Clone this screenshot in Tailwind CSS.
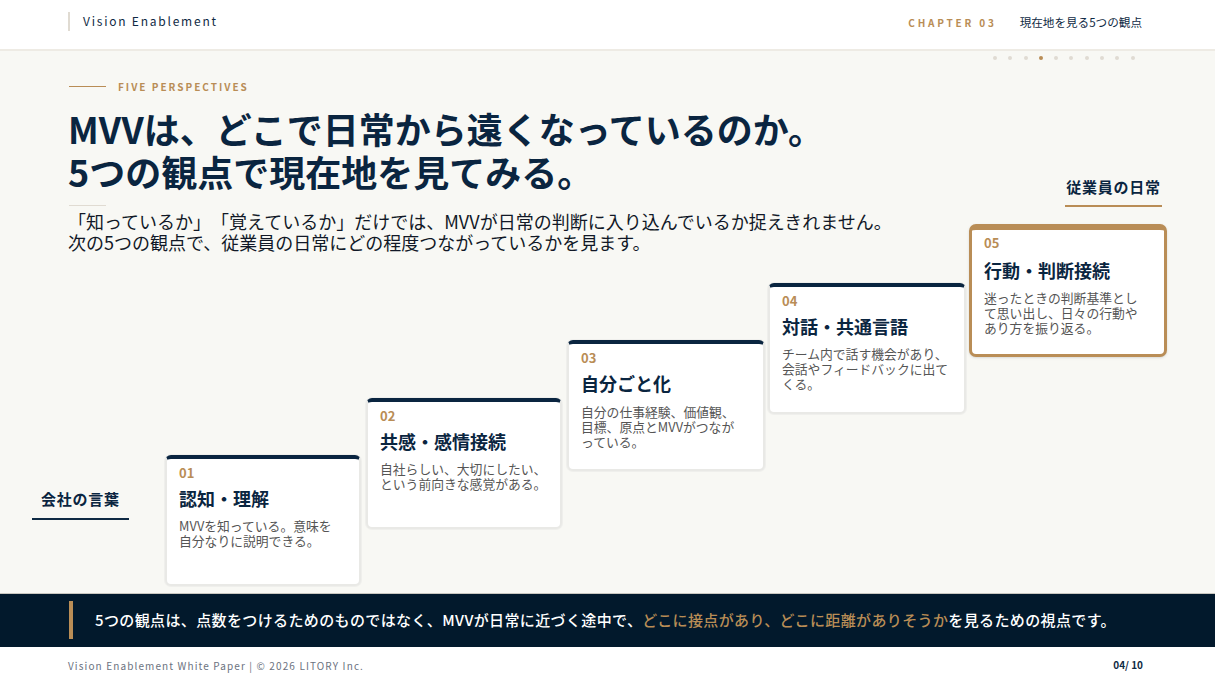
<!DOCTYPE html>
<html lang="ja">
<head>
  <meta charset="UTF-8">
  <title>Vision Enablement</title>
  <script src="https://cdn.jsdelivr.net/npm/@tailwindcss/browser@4"></script>
</head>
<body class="font-['Noto_Sans_CJK_JP','Noto_Sans',sans-serif] [text-spacing-trim:space-all] text-[#0f2a44] bg-white">
<div class="relative w-[1215px] h-[682px] overflow-hidden flex flex-col">

  <!-- Header -->
  <header class="h-[51px] shrink-0 bg-white border-b-2 border-[#eeebe4] flex items-center justify-between pl-[68px] pr-[73px] pb-[7px]">
    <div class="border-l-2 border-[#e0dbd2] pl-[13px] h-[19px] flex items-center text-[12px] tracking-[0.148em] text-[#0f2a44]">Vision Enablement</div>
    <div class="flex items-center gap-[23px] pt-[3px]">
      <span class="text-[10px] font-bold tracking-[0.28em] text-[#b98d56]">CHAPTER 03</span>
      <span class="text-[11.6px] text-[#0f2a44]">現在地を見る5つの観点</span>
    </div>
  </header>

  <!-- Progress dots -->
  <div class="absolute left-[993px] top-[56px] flex items-center gap-[11.3px]">
    <span class="w-[4px] h-[4px] rounded-full bg-[#e0dbd2]"></span>
    <span class="w-[4px] h-[4px] rounded-full bg-[#e0dbd2]"></span>
    <span class="w-[4px] h-[4px] rounded-full bg-[#e0dbd2]"></span>
    <span class="w-[4px] h-[4px] rounded-full bg-[#b98d56]"></span>
    <span class="w-[4px] h-[4px] rounded-full bg-[#e0dbd2]"></span>
    <span class="w-[4px] h-[4px] rounded-full bg-[#e0dbd2]"></span>
    <span class="w-[4px] h-[4px] rounded-full bg-[#e0dbd2]"></span>
    <span class="w-[4px] h-[4px] rounded-full bg-[#e0dbd2]"></span>
    <span class="w-[4px] h-[4px] rounded-full bg-[#e0dbd2]"></span>
    <span class="w-[4px] h-[4px] rounded-full bg-[#e0dbd2]"></span>
  </div>

  <!-- Main -->
  <main class="flex-1 bg-[#f8f8f4] grid">
    <!-- Heading block -->
    <section class="col-start-1 row-start-1 pl-[69px] pt-[26px]">
      <div class="flex items-center gap-[12px] h-[18px]">
        <span class="w-[37px] h-px bg-[#b98d56]"></span>
        <span class="text-[10px] font-bold tracking-[0.2em] text-[#b98d56]">FIVE PERSPECTIVES</span>
      </div>
      <h1 class="mt-[12px] -ml-px text-[36px] leading-[43px] font-bold text-[#0a2540]">MVVは、どこで日常から遠くなっているのか。<br>5つの観点で現在地を見てみる。</h1>
      <div class="mt-[12px] w-[37px] h-px bg-[#e0dbd2]"></div>
      <p class="mt-[5px] -ml-px text-[18px] leading-[21px] text-[#111827]">「知っているか」「覚えているか」だけでは、MVVが日常の判断に入り込んでいるか捉えきれません。<br>次の5つの観点で、従業員の日常にどの程度つながっているかを見ます。</p>
    </section>

    <!-- Stairs -->
    <section class="col-start-1 row-start-1 self-end flex items-end pl-[32px] pb-[7px]">
      <div class="w-[97px] mr-[36px] mb-[66px] border-b-2 border-[#0f2a44] pb-[9px] text-center text-[15px] leading-[21px] font-bold tracking-[0.05em] text-[#0a2540]">会社の言葉</div>

      <article class="w-[196px] h-[131px] mr-[5px] bg-white rounded-[6px] border-2 border-[#e9e9e6] border-t-[4px] border-t-[#0a2540] px-[12px] shadow-[0_0_0_1px_#efefec]">
        <div class="text-[13px] leading-[17px] font-bold text-[#b98d56] mt-[5px]">01</div>
        <h2 class="mt-[5px] text-[18px] leading-[24px] font-bold text-[#0a2540]">認知・理解</h2>
        <p class="mt-[8px] text-[12.8px] leading-[15px] text-[#555]">MVVを知っている。意味を<br>自分なりに説明できる。</p>
      </article>

      <article class="w-[196px] h-[131px] mr-[5px] mb-[57px] bg-white rounded-[6px] border-2 border-[#e9e9e6] border-t-[4px] border-t-[#0a2540] px-[12px] shadow-[0_0_0_1px_#efefec]">
        <div class="text-[13px] leading-[17px] font-bold text-[#b98d56] mt-[5px]">02</div>
        <h2 class="mt-[5px] text-[18px] leading-[24px] font-bold text-[#0a2540]">共感・感情接続</h2>
        <p class="mt-[8px] text-[12.8px] leading-[15px] text-[#555]">自社らしい、大切にしたい、<br>という前向きな感覚がある。</p>
      </article>

      <article class="w-[198px] h-[131px] mr-[3px] mb-[115px] bg-white rounded-[6px] border-2 border-[#e9e9e6] border-t-[4px] border-t-[#0a2540] px-[12px] shadow-[0_0_0_1px_#efefec]">
        <div class="text-[13px] leading-[17px] font-bold text-[#b98d56] mt-[5px]">03</div>
        <h2 class="mt-[5px] text-[18px] leading-[24px] font-bold text-[#0a2540]">自分ごと化</h2>
        <p class="mt-[9px] text-[12.8px] leading-[15px] text-[#555]">自分の仕事経験、価値観、<br>目標、原点とMVVがつなが<br>っている。</p>
      </article>

      <article class="w-[198px] h-[131px] mr-[3px] mb-[172px] bg-white rounded-[6px] border-2 border-[#e9e9e6] border-t-[4px] border-t-[#0a2540] px-[12px] shadow-[0_0_0_1px_#efefec]">
        <div class="text-[13px] leading-[17px] font-bold text-[#b98d56] mt-[5px]">04</div>
        <h2 class="mt-[5px] text-[18px] leading-[24px] font-bold text-[#0a2540]">対話・共通言語</h2>
        <p class="mt-[8px] text-[12.8px] leading-[15px] text-[#555]">チーム内で話す機会があり、<br>会話やフィードバックに出て<br>くる。</p>
      </article>

      <div class="w-[198px] mb-[229px] flex flex-col">
        <div class="self-end w-[97px] mr-[5px] mb-[17px] border-b-2 border-[#b98d56] pb-[8px] pt-[1px] text-center text-[15px] leading-[21px] font-bold tracking-[0.05em] text-[#0a2540]">従業員の日常</div>
        <article class="h-[133px] bg-white rounded-[7px] border-[3px] border-[#b98d56] border-t-[6px] px-[12px] shadow-sm">
          <div class="text-[13px] leading-[17px] font-bold text-[#b98d56] mt-[4px]">05</div>
          <h2 class="mt-[7px] text-[18px] leading-[24px] font-bold text-[#0a2540]">行動・判断接続</h2>
          <p class="mt-[8px] text-[12.8px] leading-[15px] text-[#555]">迷ったときの判断基準とし<br>て思い出し、日々の行動や<br>あり方を振り返る。</p>
        </article>
      </div>
    </section>
  </main>

  <!-- Message bar -->
  <div class="h-[54px] shrink-0 bg-[#02192c] border-t border-[#c9c7c0] flex items-center pl-[69px] pb-[1px]">
    <span class="w-[4px] h-[38px] bg-[#b98d56] mr-[22px]"></span>
    <p class="text-[15px] font-medium text-white tracking-[0.025em]">5つの観点は、点数をつけるためのものではなく、MVVが日常に近づく途中で、<span class="text-[#b98d56]">どこに接点があり、どこに距離がありそうか</span>を見るための視点です。</p>
  </div>

  <!-- Footer -->
  <footer class="h-[35px] shrink-0 bg-white flex items-center justify-between pl-[68px] pr-[72px]">
    <span class="text-[10px] tracking-[0.112em] text-[#6b7280] pt-[1px]">Vision Enablement White Paper | © 2026 LITORY Inc.</span>
    <span class="text-[10px] font-bold text-[#0f2a44]">04/ 10</span>
  </footer>
</div>
</body>
</html>
